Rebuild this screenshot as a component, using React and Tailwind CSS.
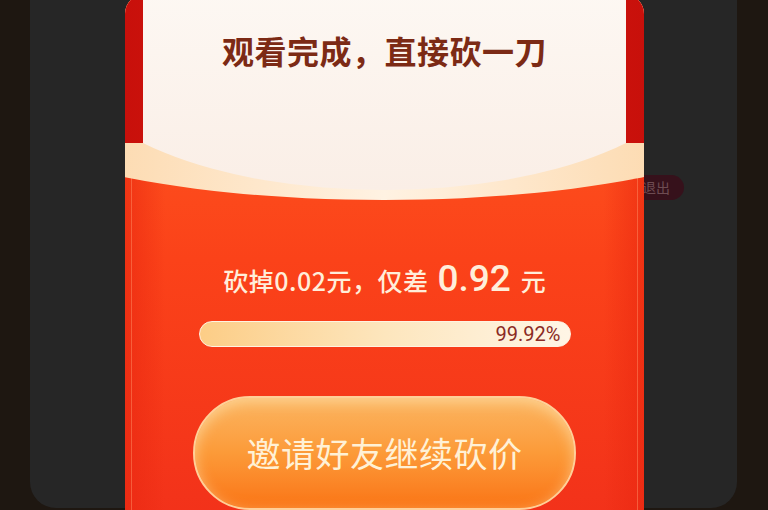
import React from 'react';

const CJK = { fontFamily: '"Noto Sans CJK SC", "Noto Sans", sans-serif' };

export default function App() {
    return (
        <div className="w-[768px] h-[510px] overflow-hidden bg-[#1e1711] pl-[30px] pr-[31px]" style={CJK}>
            <div className="relative h-[514px] rounded-b-[26px] bg-[#262626] pl-[95px]">
                {/* pill sitting behind the card */}
                <div className="absolute left-[560px] top-[181px] flex h-[25px] w-[94px] items-center justify-end rounded-full bg-[#36111b] pr-[14px] text-[14px] text-[#6e4c52]">
                    退出
                </div>

                <div className="relative z-10 mt-[-6px] h-[530px] w-[519px] overflow-hidden rounded-t-[20px] bg-gradient-to-b from-[#ff5c22] via-[#fb4219] to-[#f2311a]">
                    {/* side shading + inner lines */}
                    <div className="absolute inset-y-0 left-0 w-[40px] bg-gradient-to-r from-[#e8260f]/60 to-transparent"/>
                    <div className="absolute inset-y-0 right-0 w-[40px] bg-gradient-to-l from-[#e8260f]/60 to-transparent"/>
                    <div className="absolute left-[6px] right-[6px] top-[183px] bottom-0 border-x border-[#ff8b62]/50"/>

                    {/* top panel */}
                    <div className="relative h-[206px]">
                        <div className="absolute left-[-141px] top-[-300px] h-[506px] w-[800px] rounded-b-[400px_96px] bg-gradient-to-r from-[#fbd09a] via-[#fff2e2] to-[#fbd09a]"/>
                        <div className="absolute inset-x-0 top-0 h-[149px] bg-gradient-to-r from-[#c8100b] via-[#e01c10] to-[#c8100b]"/>
                        <div className="absolute left-[18px] right-[18px] top-0 h-[200px] overflow-hidden">
                            <div className="absolute left-[-69px] top-[-200px] h-[396px] w-[621px] rounded-b-[310px_127px] bg-gradient-to-b from-[#fffdfa] via-[#fdf8f3] to-[#faeee6]"/>
                        </div>
                        <div className="relative pt-[38px] text-center text-[32px] font-bold leading-[36px] tracking-[0.5px] text-[#7c2a15]">
                            观看完成，直接砍一刀
                        </div>
                    </div>

                    <div className="relative flex flex-col items-center">
                        <div className="mt-[62px] flex items-baseline text-[#ffeeda]">
                            <span className="text-[25px] font-medium leading-[34px] tracking-[0.5px]">砍掉0.02元，仅差</span>
                            <span className="ml-[9px] text-[37px] font-medium leading-[34px]" style={{fontFamily: 'Roboto, sans-serif'}}>0.92</span>
                            <span className="ml-[10px] text-[25px] font-medium leading-[34px]">元</span>
                        </div>

                        <div className="mt-[24px] flex h-[26px] w-[372px] items-center justify-end rounded-full border border-[#fff3e2] bg-gradient-to-r from-[#fccd86] via-[#fde6bd] to-[#fff5e6] pr-[9px]">
                            <span className="text-[20px] leading-none text-[#8b2a24]" style={{fontFamily: 'Roboto, sans-serif'}}>99.92%</span>
                        </div>

                        <div className="mt-[49px] flex h-[114px] w-[383px] items-center justify-center rounded-full border-2 border-[#ffcf98] bg-gradient-to-b from-[#fbb560] via-[#fc9a38] to-[#fa7413] shadow-[inset_0_4px_14px_rgba(255,230,180,0.6)]">
                            <span className="text-[34px] leading-none tracking-[0.5px] text-[#fff1d6]">邀请好友继续砍价</span>
                        </div>
                    </div>
                </div>
            </div>
        </div>
    );
}
